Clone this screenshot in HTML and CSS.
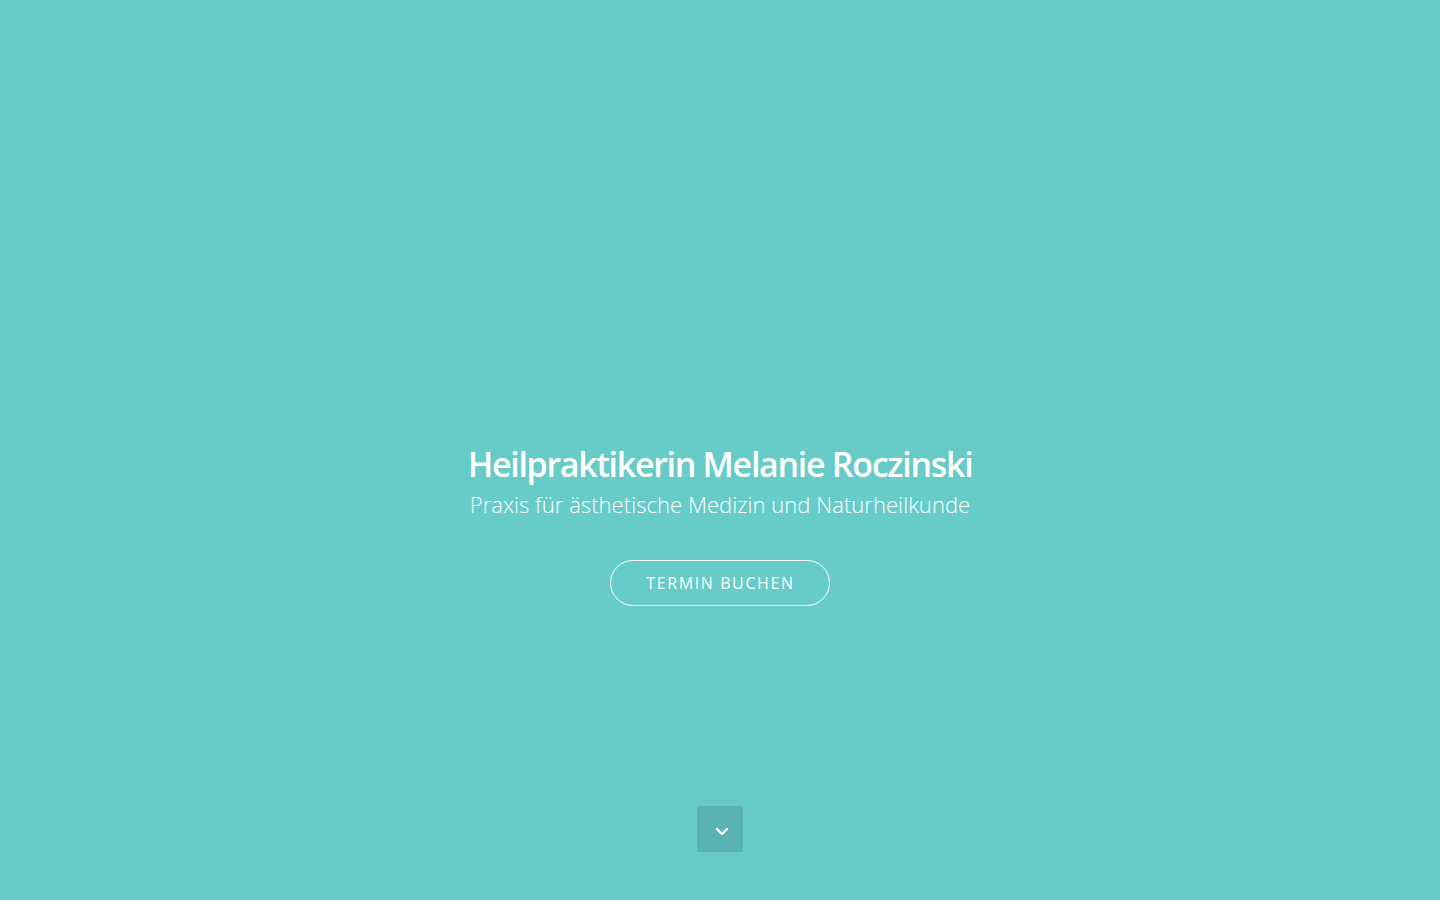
FILE: index.html
```html
<!DOCTYPE html>
<html lang="de">
<head>
<meta charset="utf-8">
<title>Heilpraktikerin Melanie Roczinski</title>
<link rel="stylesheet" href="styles.css">
</head>
<body>
<section class="hero">
  <div class="hero-content">
    <h1 class="title">Heilpraktikerin Melanie Roczinski</h1>
    <p class="subtitle">Praxis für ästhetische Medizin und Naturheilkunde</p>
    <a class="btn" href="#">TERMIN BUCHEN</a>
  </div>
  <a class="scroll-down" href="#">
    <svg width="14" height="9" viewBox="0 0 14 9"><path d="M2 2 L7 7 L12 2" fill="none" stroke="#fff" stroke-width="2.4" stroke-linecap="round" stroke-linejoin="round"/></svg>
  </a>
</section>
</body>
</html>
```
FILE: styles.css
```css
html, body {
  margin: 0;
  padding: 0;
}
body {
  background: #67cbc8;
  font-family: "Open Sans", "Noto Sans", sans-serif;
  color: #fff;
}
.hero {
  position: relative;
  height: 900px;
  display: flex;
  align-items: center;
  justify-content: center;
}
.hero-content {
  display: flex;
  flex-direction: column;
  align-items: center;
  margin-top: 150px;
}
.title {
  margin: 0;
  font-size: 34px;
  font-weight: 600;
  letter-spacing: -1.3px;
  line-height: 40px;
}
.subtitle {
  margin: 5px 0 0;
  font-size: 22px;
  font-weight: 300;
  letter-spacing: 0.05px;
  line-height: 30px;
}
.btn {
  margin-top: 41px;
  box-sizing: border-box;
  width: 220px;
  height: 46px;
  border: 1px solid #fff;
  border-radius: 23px;
  display: flex;
  align-items: center;
  justify-content: center;
  color: #fff;
  text-decoration: none;
  font-size: 16px;
  letter-spacing: 1.6px;
  font-weight: 400;
  padding-left: 1px;
}
.scroll-down {
  position: absolute;
  left: 697px;
  top: 806px;
  width: 46px;
  height: 46px;
  border-radius: 2px;
  background: #5bb3b1;
  display: flex;
  align-items: center;
  justify-content: center;
  padding-top: 4px;
  box-sizing: border-box;
  padding-left: 4px;
}
```
